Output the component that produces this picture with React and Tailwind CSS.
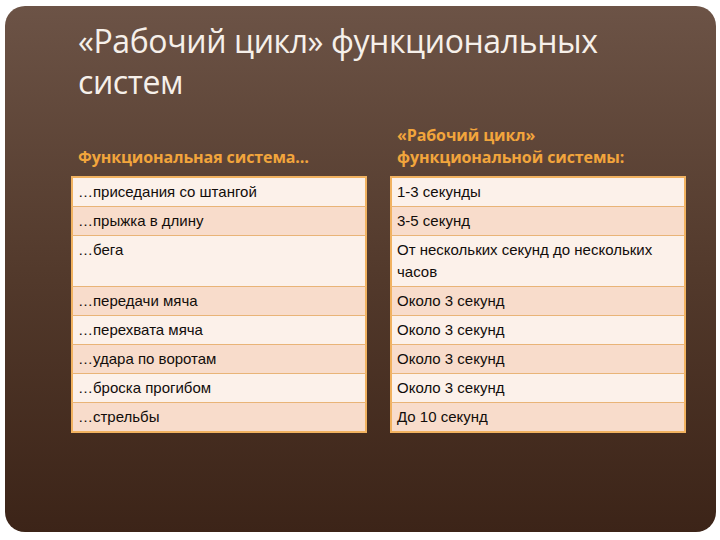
const rows = [
  ["…приседания со штангой", "1-3 секунды"],
  ["…прыжка в длину", "3-5 секунд"],
  ["…бега", "От нескольких секунд до нескольких часов"],
  ["…передачи мяча", "Около 3 секунд"],
  ["…перехвата мяча", "Около 3 секунд"],
  ["…удара по воротам", "Около 3 секунд"],
  ["…броска прогибом", "Около 3 секунд"],
  ["…стрельбы", "До 10 секунд"],
];

function Cell({ text, index }) {
  const last = index === rows.length - 1;
  const odd = index % 2 === 0;
  return (
    <div
      className={`border-x-2 border-[#f1b260] px-[5px] pt-[3px] pb-[3px] text-[15px] leading-[22px] text-[#120d0a] ${
        odd ? "bg-[#fcf1ea]" : "bg-[#f8dccb]"
      } ${index === 0 ? "border-t-2" : "border-t border-t-[#e9b477]"} ${
        last ? "border-b-2" : ""
      }`}
    >
      {text}
    </div>
  );
}

export default function App() {
  return (
    <div className="w-[720px] h-[540px] bg-white pt-[6px] pl-[5px] pr-[4px] pb-[8px] font-['Liberation_Sans',sans-serif]">
      <div className="h-full rounded-[20px] bg-gradient-to-b from-[#6c5346] via-[#533a2c] to-[#3c2418] flex flex-col">
        {/* TITLE */}
        <h1 className="pl-[73px] pt-[14px] text-[32px] leading-[41px] text-[#f6f0ea] font-['Open_Sans',sans-serif] tracking-[-0.4px]">
          «Рабочий цикл» функциональных
          <br />
          систем
        </h1>

        {/* TABLE */}
        <div className="mt-[22px] pl-[66px] grid grid-cols-[296px_296px] gap-x-[23px]">
          <div className="flex items-end px-[7px] pb-[8px] text-[16px] leading-[22px] font-bold text-[#f2a53c] font-['Open_Sans',sans-serif] tracking-[-0.1px]">
            Функциональная система…
          </div>
          <div className="px-[7px] pb-[8px] text-[16px] leading-[22px] font-bold text-[#f2a53c] font-['Open_Sans',sans-serif] tracking-[-0.1px]">
            «Рабочий цикл»
            <br />
            функциональной системы:
          </div>
          {rows.map((r, i) => [
            <Cell key={"a" + i} text={r[0]} index={i} />,
            <Cell key={"b" + i} text={r[1]} index={i} />,
          ])}
        </div>
      </div>
    </div>
  );
}
